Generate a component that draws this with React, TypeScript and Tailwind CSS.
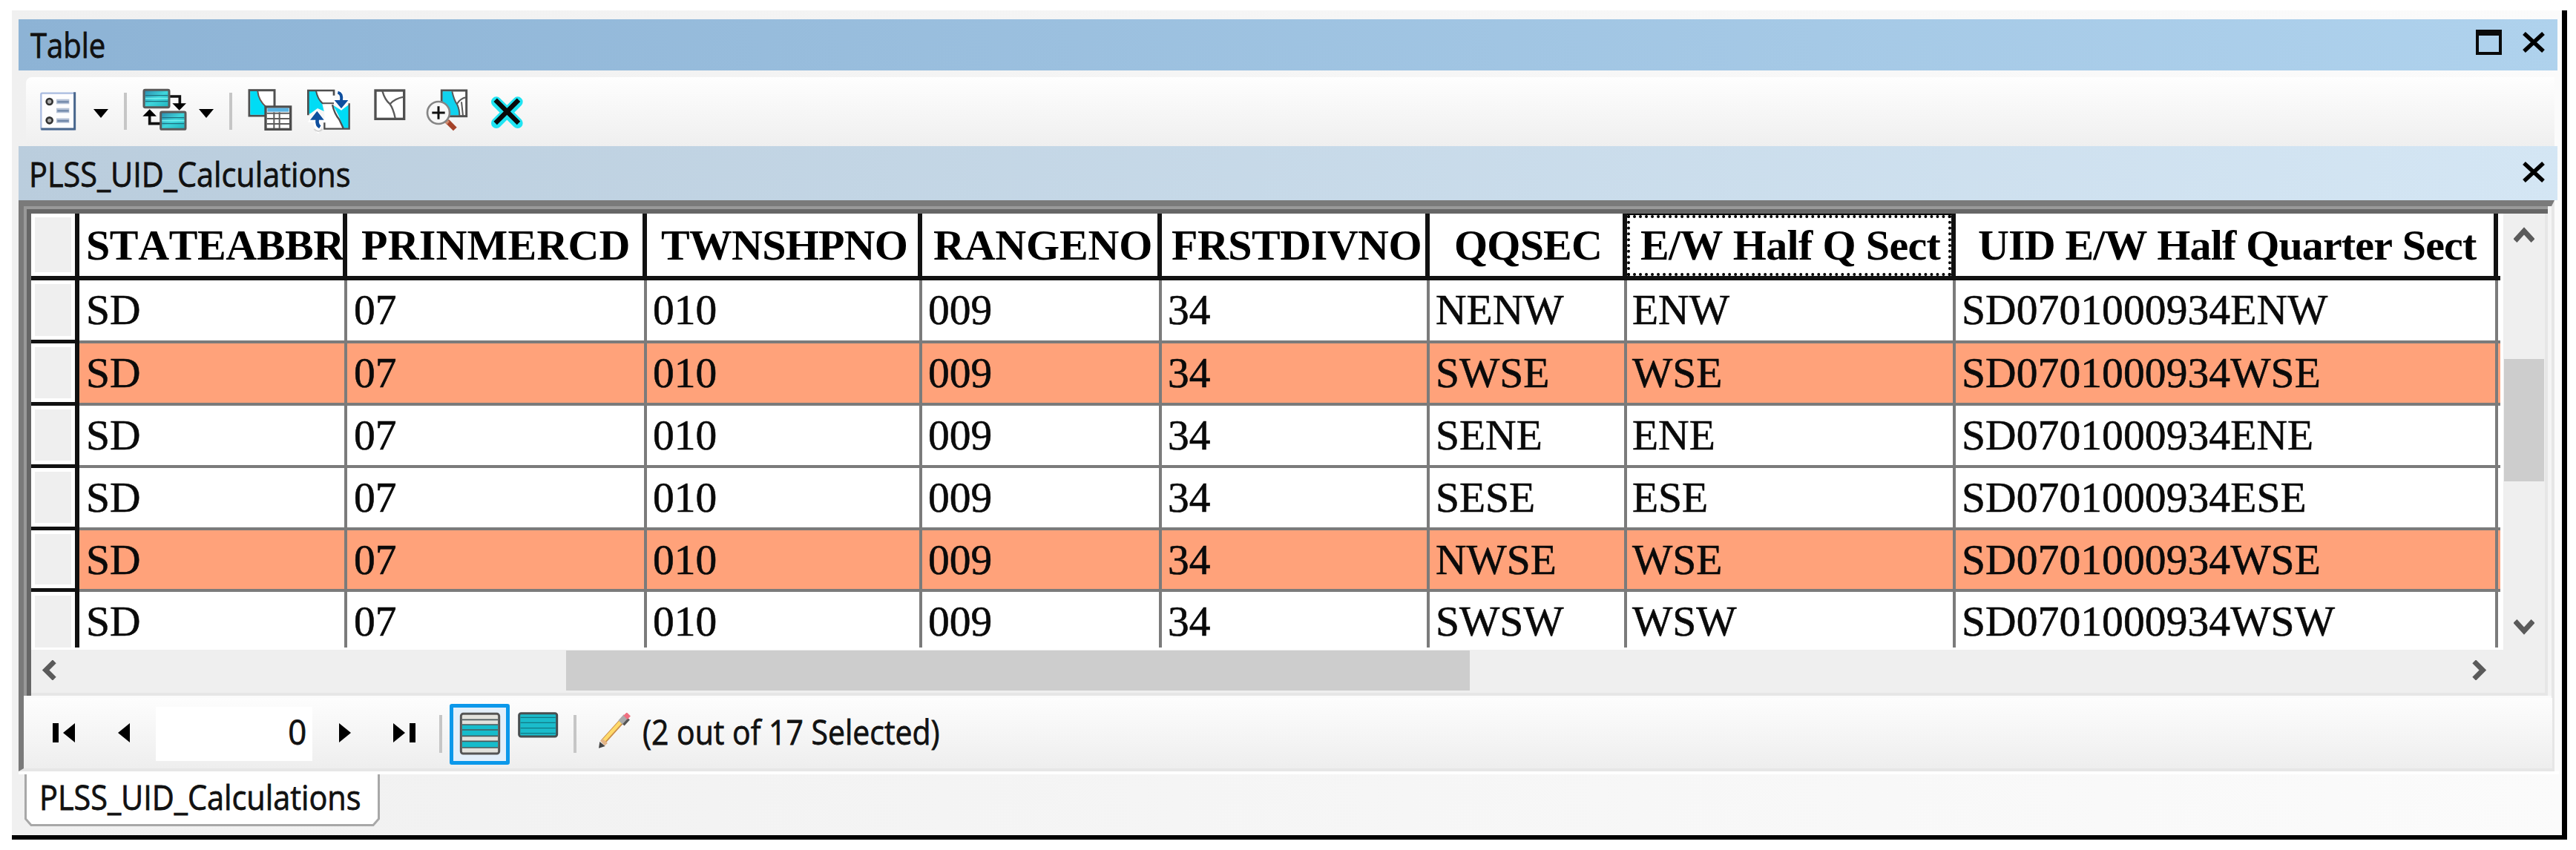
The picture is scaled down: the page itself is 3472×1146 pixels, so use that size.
import React from "react";

type Column = { title: string; width: string; pad: string; text: string; cell: string; focused?: boolean };

const columns: Column[] = [
  { title: "STATEABBR", width: "w-[361px]", pad: "pl-[9px]", text: "tracking-[-0.4px]", cell: "pl-[9px]" },
  { title: "PRINMERCD", width: "w-[404px]", pad: "pl-[19px]", text: "tracking-[0.2px]", cell: "pl-[9px]" },
  { title: "TWNSHPNO", width: "w-[371px]", pad: "pl-[19px]", text: "tracking-[-0.8px]", cell: "pl-[8px]" },
  { title: "RANGENO", width: "w-[323px]", pad: "pl-[15px]", text: "tracking-[-0.2px]", cell: "pl-[8px]" },
  { title: "FRSTDIVNO", width: "w-[361px]", pad: "pl-[13px]", text: "tracking-[-0.5px]", cell: "pl-[8px]" },
  { title: "QQSEC", width: "w-[266px]", pad: "pl-[33px]", text: "tracking-[-0.8px]", cell: "pl-[8px]" },
  { title: "E/W Half Q Sect", width: "w-[443px]", pad: "pl-[18px]", text: "tracking-[-0.65px]", cell: "pl-[7px]", focused: true },
  { title: "UID E/W Half Quarter Sect", width: "w-[731px]", pad: "pl-[30px]", text: "tracking-[-0.85px]", cell: "pl-[8px] tracking-[0.1px]" },
];

const rows = [
  { qq: "NENW", half: "ENW", selected: false, height: "h-[85px]" },
  { qq: "SWSE", half: "WSE", selected: true, height: "h-[84px]" },
  { qq: "SENE", half: "ENE", selected: false, height: "h-[84px]" },
  { qq: "SESE", half: "ESE", selected: false, height: "h-[84px]" },
  { qq: "NWSE", half: "WSE", selected: true, height: "h-[83px]" },
  { qq: "SWSW", half: "WSW", selected: false, height: "h-[75px]" },
];

const label = "block origin-left whitespace-nowrap font-['Open_Sans','Noto_Sans',sans-serif] text-[46px] leading-[60px] text-[#111] [-webkit-text-stroke:0.8px_#111] [font-kerning:none]";

function CloseIcon() {
  return (
    <svg className="h-[28px] w-[32px]" viewBox="0 0 32 28">
      <path d="M3 2 29 26M29 2 3 26" stroke="#000" strokeWidth="5.5" />
    </svg>
  );
}

function DropArrow() {
  return (
    <svg className="mt-[26px] h-[14px] w-[22px]" viewBox="0 0 22 14">
      <path d="M1 1H21L11 13Z" fill="#000" />
    </svg>
  );
}

function OptionsIcon() {
  return (
    <svg className="h-[66px] w-[52px]" viewBox="36 48 156 198">
      <rect x="46" y="77" width="136" height="146" rx="4" fill="#fdfdfe" stroke="#a9bbe0" strokeWidth="7" />
      <path d="M182 73V222H46" fill="none" stroke="#48668c" strokeWidth="9" />
      <circle cx="80" cy="111" r="12" fill="#aaa" stroke="#333" strokeWidth="8" />
      <circle cx="80" cy="187" r="12" fill="#aaa" stroke="#333" strokeWidth="8" />
      <path d="M108 111H160M108 147H160M108 188H160" stroke="#b4c1d6" strokeWidth="19" />
      <path d="M112 112H158M112 148H158M112 189H158" stroke="#6f86a8" strokeWidth="7" />
    </svg>
  );
}

function RelatedIcon() {
  return (
    <svg className="h-[66px] w-[62px]" viewBox="452 48 186 198">
      <defs>
        <linearGradient id="teal" x1="0" y1="0" x2="1" y2="1">
          <stop offset="0" stopColor="#2a86ab" />
          <stop offset="0.5" stopColor="#3fd6dc" />
          <stop offset="1" stopColor="#1fb3bd" />
        </linearGradient>
      </defs>
      <path d="M566 90H606V122" fill="none" stroke="#111" strokeWidth="11" />
      <path d="M576 118H632L604 146Z" fill="#000" />
      <path d="M530 200H484V165" fill="none" stroke="#111" strokeWidth="11" />
      <path d="M456 170H512L484 142Z" fill="#000" />
      <rect x="461" y="64" width="102" height="70" rx="5" fill="url(#teal)" stroke="#5a5a5a" strokeWidth="9" />
      <path d="M467 86H558M467 110H558" stroke="#1d6f80" strokeWidth="4" />
      <path d="M467 98H558" stroke="#74f0f0" strokeWidth="5" />
      <rect x="529" y="153" width="100" height="70" rx="5" fill="url(#teal)" stroke="#5a5a5a" strokeWidth="9" />
      <path d="M534 176H624M534 200H624" stroke="#1d6f80" strokeWidth="4" />
      <path d="M534 188H624" stroke="#74f0f0" strokeWidth="5" />
    </svg>
  );
}

function SelectByAttributesIcon() {
  return (
    <svg className="h-[66px] w-[62px]" viewBox="878 48 186 198">
      <rect x="887" y="65" width="102" height="103" fill="#fff" stroke="#505050" strokeWidth="9" />
      <path d="M891 69H921Q924 105 955 133V164H891Z" fill="#00dcf5" />
      <path d="M921 69Q924 105 955 133" fill="none" stroke="#6a5550" strokeWidth="6" />
      <rect x="953" y="132" width="101" height="91" fill="#fff" stroke="#4c4c4c" strokeWidth="10" />
      <rect x="960" y="137" width="87" height="15" fill="#58b4e4" />
      <path d="M958 158H1050M958 180H1050M958 201H1050M987 154V219M1009 154V219" stroke="#5c5c5c" strokeWidth="6" />
    </svg>
  );
}

function SwitchSelectionIcon() {
  return (
    <svg className="h-[66px] w-[62px]" viewBox="36 48 186 198">
      <path d="M84 66H146V88L166 118H110Z" fill="#fff" />
      <path d="M46 66H78Q86 100 102 116L110 150L84 138L54 160H46Z" fill="#00dcf5" />
      <path d="M46 166V66H150V86" fill="none" stroke="#4e4e4e" strokeWidth="8" />
      <path d="M78 68Q84 100 104 118H150" fill="none" stroke="#4e4e4e" strokeWidth="6" />
      <path d="M112 122H142Q160 180 186 218H112Z" fill="#fff" />
      <path d="M144 124 180 146 212 122V218H186Q176 170 144 124Z" fill="#00dcf5" />
      <path d="M212 118V221H112V196M144 124Q152 160 172 184L188 218" fill="none" stroke="#4e4e4e" strokeWidth="7" />
      <path d="M166 72Q184 74 180 104" fill="none" stroke="#fff" strokeWidth="20" />
      <path d="M144 98H216L180 146Z" fill="#fff" />
      <path d="M166 74Q184 78 180 106" fill="none" stroke="#0f4f9e" strokeWidth="12" />
      <path d="M152 105H208L180 139Z" fill="#0f4f9e" />
      <path d="M44 194H118L82 142Z" fill="#fff" />
      <path d="M84 190Q84 222 94 226" fill="none" stroke="#fff" strokeWidth="32" />
      <path d="M54 185H110L82 149Z" fill="#0f4f9e" />
      <path d="M83 182Q80 206 94 214" fill="none" stroke="#0f4f9e" strokeWidth="14" />
      <path d="M70 222Q88 240 104 222" fill="none" stroke="#d5d5d5" strokeWidth="6" />
    </svg>
  );
}

function ClearSelectionIcon() {
  return (
    <svg className="h-[66px] w-[46px]" viewBox="306 48 138 198">
      <rect x="318" y="66" width="116" height="115" fill="#fff" stroke="#505050" strokeWidth="10" />
      <path d="M346 68Q356 104 376 120Q390 138 398 178M378 120Q398 98 432 92" fill="none" stroke="#5a5a5a" strokeWidth="7" />
    </svg>
  );
}

function ZoomSelectedIcon() {
  return (
    <svg className="h-[66px] w-[62px]" viewBox="514 48 186 198">
      <rect x="584" y="66" width="100" height="104" fill="#fff" stroke="#505050" strokeWidth="9" />
      <path d="M588 70H626Q634 106 650 124Q658 142 656 166H604L588 124Z" fill="#10d2ee" />
      <path d="M626 70Q634 106 646 122Q656 142 656 168M646 120Q660 98 682 94M664 112L670 168" fill="none" stroke="#5a5a5a" strokeWidth="6" />
      <path d="M606 190 638 222" stroke="#a5432a" strokeWidth="20" />
      <path d="M602 190 610 198" stroke="#d08c70" strokeWidth="16" />
      <circle cx="571" cy="156" r="45" fill="#f8f8f8" stroke="#858585" strokeWidth="8" />
      <path d="M571 130V182M545 156H597" stroke="#111" strokeWidth="9" />
    </svg>
  );
}

function DeleteIcon() {
  return (
    <svg className="h-[66px] w-[50px]" viewBox="776 48 150 198">
      <path d="M806 112 892 198M892 112 806 198" stroke="#1fe4f2" strokeWidth="42" strokeLinecap="round" />
      <path d="M802 104 896 198M896 104 802 198" stroke="#0a0a0a" strokeWidth="19" />
    </svg>
  );
}

function Chevron({ d, className }: { d: string; className: string }) {
  return (
    <svg className={className} viewBox="0 0 30 30">
      <path d={d} fill="none" stroke="#5a5a5a" strokeWidth="7.5" />
    </svg>
  );
}

function Divider({ className }: { className: string }) {
  return <div className={"w-[4px] shrink-0 bg-[#c6c6c6] " + className} />;
}

function HeaderRow() {
  return (
    <div className="flex h-[90px] w-[3328px]">
      <div className="h-full w-[65px] shrink-0 border-r-[6px] border-b-[6px] border-[#111] bg-white p-[5px]">
        <div className="h-full bg-[#efefef]" />
      </div>
      {columns.map((c) => (
        <div
          key={c.title}
          className={
            "relative h-full shrink-0 overflow-hidden border-r-[6px] border-b-[6px] border-[#111] bg-white whitespace-nowrap " +
            c.width
          }
        >
          <span className={"block text-[58px] leading-[85px] font-bold text-black " + c.pad + " " + c.text}>{c.title}</span>
          {c.focused && (
            <div className="absolute inset-0 border-t-[2px] border-black">
              <div className="h-full w-full border-[4px] border-dotted border-black" />
            </div>
          )}
        </div>
      ))}
      <div className="h-full w-[3px] shrink-0 border-b-[6px] border-[#111] bg-white" />
    </div>
  );
}

function DataRow({ row, last }: { row: (typeof rows)[number]; last: boolean }) {
  const values = ["SD", "07", "010", "009", "34", row.qq, row.half, "SD0701000934" + row.half];
  const line = last ? "border-[#7b7b7b] " : "border-b-[4px] border-[#7b7b7b] ";
  const fill = row.selected ? "bg-[#ffa27a] " : "bg-white ";
  return (
    <div className={"flex w-[3328px] " + row.height}>
      <div
        className={
          "h-full w-[65px] shrink-0 border-r-[6px] border-[#111] bg-white p-[5px] " + (last ? "pb-0" : "border-b-[5px]")
        }
      >
        <div className="h-full bg-[#efefef]" />
      </div>
      {columns.map((c, i) => (
        <div key={c.title} className={"h-full shrink-0 overflow-hidden border-r-[4px] " + line + fill + c.width}>
          <span
            className={
              "block text-[57.5px] leading-[79px] whitespace-nowrap text-[#0a0a0a] [-webkit-text-stroke:0.6px_#0a0a0a] " + c.cell
            }
          >
            {values[i]}
          </span>
        </div>
      ))}
      <div className={"h-full w-[3px] shrink-0 " + line + fill} />
    </div>
  );
}

function Grid() {
  return (
    <div className="h-[660px] w-[3402px] border-t-[4px] border-l-[4px] border-[#999]">
      <div className="flex h-full border-t-[6px] border-l-[6px] border-[#666] bg-[#efefef]">
        <div className="w-[3332px] shrink-0">
          <div className="h-[588px] bg-white font-['Liberation_Serif','Times_New_Roman',serif] [font-kerning:none]">
            <HeaderRow />
            {rows.map((r, i) => (
              <DataRow key={r.qq} row={r} last={i === rows.length - 1} />
            ))}
          </div>
          <div className="flex h-[55px] items-center">
            <Chevron d="M22 2 9 15 22 28" className="ml-[10px] h-[27px] w-[30px]" />
            <div className="ml-[681px] h-[54px] w-[1218px] bg-[#cdcdcd]" />
            <Chevron d="M8 2 21 15 8 28" className="ml-[1345px] h-[27px] w-[30px]" />
          </div>
          <div className="mt-[3px] h-[4px] w-[3390px] bg-[#e6e6e6]" />
        </div>
        <div className="flex w-[56px] shrink-0 flex-col items-center">
          <Chevron d="M2 22 15 8 28 22" className="mt-[16px] h-[28px] w-[28px]" />
          <div className="mt-[152px] h-[165px] w-[54px] bg-[#cdcdcd]" />
          <Chevron d="M2 8 15 22 28 8" className="mt-[181px] h-[28px] w-[28px]" />
        </div>
        <div className="w-[4px] shrink-0 bg-[#e6e6e6]" />
      </div>
    </div>
  );
}

function NavIcon({ d, className }: { d: string; className: string }) {
  return (
    <svg className={"h-[26px] shrink-0 " + className} viewBox="0 0 32 26" preserveAspectRatio="xMinYMin">
      <path d={d} fill="#000" />
    </svg>
  );
}

function NavBar() {
  return (
    <div className="flex h-[95px] w-[3408px] items-start rounded-tl-[8px] bg-gradient-to-b from-[#fdfdfd] to-[#eeeeee]">
      <NavIcon d="M0 0H8V26H0ZM30 0V26L14 13Z" className="mt-[34px] ml-[39px] w-[32px]" />
      <NavIcon d="M16 0V26L0 13Z" className="mt-[34px] ml-[56px] w-[32px]" />
      <div className="mt-[12px] ml-[19px] flex h-[73px] w-[211px] shrink-0 justify-end bg-white pt-[3px] pr-[8px]">
        <span className={label + " origin-right scale-x-[0.95]"}>0</span>
      </div>
      <NavIcon d="M0 0V26L16 13Z" className="mt-[34px] ml-[36px] w-[32px]" />
      <NavIcon d="M0 0V26L16 13ZM22 0H30V26H22Z" className="mt-[34px] ml-[41px] w-[32px]" />
      <Divider className="mt-[23px] ml-[30px] h-[51px]" />
      <div className="mt-[8px] ml-[10px] flex h-[82px] w-[81px] shrink-0 items-center justify-center rounded-[3px] border-[5px] border-[#0c98ea] bg-[#e3effa]">
        <svg className="-mt-[3px] h-[58px] w-[56px]" viewBox="82 86 168 174">
          <rect x="89" y="93" width="154" height="161" rx="9" fill="#e2e2dd" stroke="#555" strokeWidth="9" />
          <path d="M94 137H238V184H94ZM94 203H238V230H94Z" fill="#16bccb" />
          <path d="M94 117H238M94 137H238M94 158H238M94 183H238M94 204H238M94 230H238" stroke="#4c5a5c" strokeWidth="5" />
        </svg>
      </div>
      <svg className="mt-[18px] ml-[10px] h-[36px] w-[56px] shrink-0" viewBox="322 86 168 108">
        <rect x="330" y="94" width="153" height="94" rx="8" fill="#1bbccb" stroke="#474d4f" strokeWidth="9" />
        <path d="M336 111H477M336 132H477M336 154H477M336 175H477" stroke="#117884" strokeWidth="4" />
      </svg>
      <Divider className="mt-[23px] ml-[20px] h-[51px]" />
      <svg className="mt-[20px] ml-[28px] h-[50px] w-[50px] shrink-0" viewBox="642 93 150 150">
        <path d="M664 212 742 126" stroke="#c98c4a" strokeWidth="22" />
        <path d="M666 208 744 122" stroke="#ffda6a" strokeWidth="14" />
        <path d="M648 236 652 210 674 228Z" fill="#444" />
        <path d="M654 206 664 198 684 216 672 226Z" fill="#e3b588" />
        <path d="M736 132 758 108" stroke="#aaa" strokeWidth="24" />
        <path d="M748 142 770 118" stroke="#555" strokeWidth="10" />
        <path d="M756 112 769 99" stroke="#f06f80" strokeWidth="22" />
      </svg>
      <span className={label + " mt-[15px] ml-[11px] scale-x-[0.89]"}>(2 out of 17 Selected)</span>
    </div>
  );
}

export default function App() {
  return (
    <div className="h-[1146px] w-[3472px] overflow-hidden bg-white pt-[14px] pl-[16px]">
      <div className="h-[1118px] w-[3444px] border-r-[7px] border-b-[6px] border-black bg-gradient-to-r from-[#f0f0f0] to-[#fbfbfb] pt-[12px] pl-[9px]">
        <div className="flex h-[69px] w-[3422px] items-start bg-gradient-to-r from-[#8db3d5] to-[#afd2ed]">
          <span className={label + " mt-[4px] ml-[16px] scale-x-[0.87]"}>Table</span>
          <div className="mt-[14px] mr-[16px] ml-auto flex items-center gap-[27px]">
            <div className="h-[34px] w-[35px] border-4 border-t-[8px] border-[#0a0a0a]" />
            <CloseIcon />
          </div>
        </div>

        <div className="mt-[9px] ml-[10px] flex h-[93px] w-[3408px] items-start rounded-l-[8px] bg-gradient-to-b from-[#fefefe] to-[#efefef] pt-[12px]">
          <div className="w-[17px] shrink-0" />
          <OptionsIcon />
          <div className="mt-[4px] ml-[21px]"><DropArrow /></div>
          <Divider className="mt-[9px] ml-[20px] h-[50px]" />
          <div className="ml-[20px]"><RelatedIcon /></div>
          <div className="mt-[4px] ml-[14px]"><DropArrow /></div>
          <Divider className="mt-[9px] ml-[20px] h-[50px]" />
          <div className="ml-[20px]"><SelectByAttributesIcon /></div>
          <div className="ml-[17px]"><SwitchSelectionIcon /></div>
          <div className="ml-[28px]"><ClearSelectionIcon /></div>
          <div className="ml-[24px]"><ZoomSelectedIcon /></div>
          <div className="ml-[25px]"><DeleteIcon /></div>
        </div>

        <div className="flex h-[73px] w-[3422px] items-start bg-gradient-to-r from-[#bacddd] to-[#d4e6f4]">
          <span className={label + " mt-[7px] ml-[14px] scale-x-[0.9]"}>PLSS_UID_Calculations</span>
          <div className="mt-[21px] mr-[16px] ml-auto">
            <CloseIcon />
          </div>
        </div>

        <div className="h-[770px] w-[3418px] border-t-[8px] border-r-[4px] border-b-[4px] border-l-[7px] border-t-[#7a7a7a] border-r-[#e6e6e6] border-b-[#e6e6e6] border-l-[#7a7a7a] bg-[#f4f4f4]">
          <Grid />
          <div className="h-[98px] bg-[#fbfbfb] pt-[3px]"><NavBar /></div>
        </div>

        <div className="h-[4px] w-[3424px] bg-white" />
        <div className="ml-[8px] h-[70px] w-[479px]">
          <svg className="block h-[70px] w-[479px]" viewBox="0 0 479 70">
            <path d="M1.500 0V60L9 68.500H470L477.500 60V0" fill="#fff" stroke="#a8a8a8" strokeWidth="3" />
          </svg>
          <div className="relative -mt-[70px]">
            <span className={label + " ml-[20px] scale-x-[0.9]"}>PLSS_UID_Calculations</span>
          </div>
        </div>
      </div>
    </div>
  );
}
